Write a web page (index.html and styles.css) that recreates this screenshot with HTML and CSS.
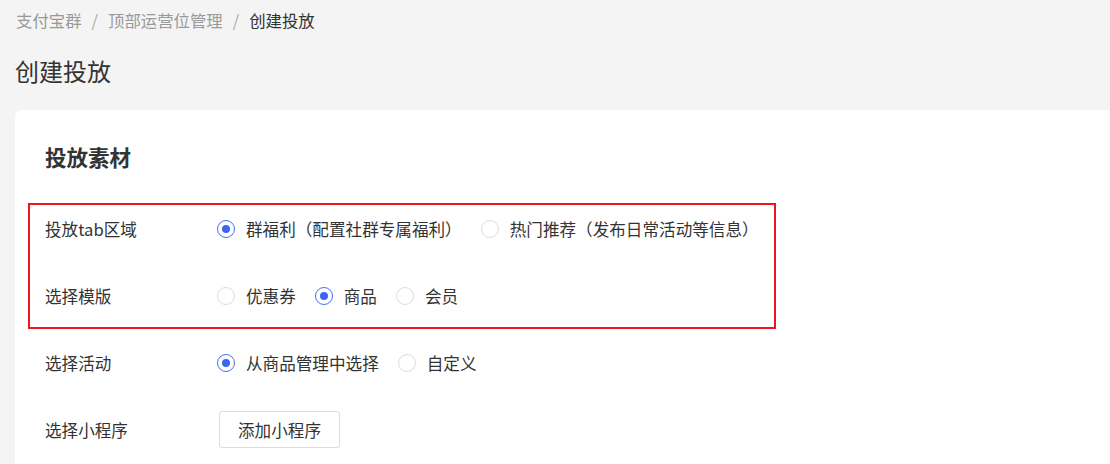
FILE: index.html
```html
<!DOCTYPE html>
<html lang="zh-CN">
<head>
<meta charset="utf-8">
<title>创建投放</title>
<link rel="stylesheet" href="styles.css">
</head>
<body>
<nav class="breadcrumb">
  <span class="crumb">支付宝群</span><span class="sep">/</span><span class="crumb">顶部运营位管理</span><span class="sep">/</span><span class="crumb current">创建投放</span>
</nav>
<h1 class="page-title">创建投放</h1>
<main class="card">
  <h2 class="section-title">投放素材</h2>
  <div class="form">
    <div class="group highlight">
      <div class="row">
        <div class="label">投放tab区域</div>
        <div class="control">
          <label class="radio checked"><span class="dot"></span><span class="text">群福利（配置社群专属福利）</span></label>
          <label class="radio"><span class="dot"></span><span class="text">热门推荐（发布日常活动等信息）</span></label>
        </div>
      </div>
      <div class="row">
        <div class="label">选择模版</div>
        <div class="control">
          <label class="radio"><span class="dot"></span><span class="text">优惠券</span></label>
          <label class="radio checked"><span class="dot"></span><span class="text">商品</span></label>
          <label class="radio"><span class="dot"></span><span class="text">会员</span></label>
        </div>
      </div>
    </div>
    <div class="row">
      <div class="label">选择活动</div>
      <div class="control">
        <label class="radio checked"><span class="dot"></span><span class="text">从商品管理中选择</span></label>
        <label class="radio"><span class="dot"></span><span class="text">自定义</span></label>
      </div>
    </div>
    <div class="row">
      <div class="label">选择小程序</div>
      <div class="control">
        <button class="btn" type="button">添加小程序</button>
      </div>
    </div>
  </div>
</main>
</body>
</html>
```

FILE: styles.css
```css
html, body {
  margin: 0;
  padding: 0;
}
body {
  background: #f4f4f4;
  font-family: "Noto Sans CJK SC", "Noto Sans", sans-serif;
  color: #333;
  font-size: 16.6px;
  text-spacing-trim: space-all;
  overflow: hidden;
}
.breadcrumb {
  padding: 8px 16px 0;
  line-height: 24px;
  font-size: 16.4px;
  color: #999;
  display: flex;
  align-items: center;
}
.breadcrumb .sep {
  margin: 0 10px;
  color: #aaa;
}
.breadcrumb .current {
  color: #333;
}
.page-title {
  margin: 23px 0 0 15px;
  font-size: 24px;
  line-height: 32px;
  font-weight: 400;
  color: #333;
}
.card {
  display: block;
  margin: 23px 0 0 15px;
  background: #fff;
  border-radius: 6px 0 0 0;
  padding: 32px 30px 40px;
  min-height: 400px;
}
.section-title {
  margin: 0;
  font-size: 21.5px;
  line-height: 30px;
  font-weight: 700;
  color: #333;
}
.form {
  margin-top: 23px;
}
.group {
  position: relative;
}
.group.highlight::after {
  content: "";
  position: absolute;
  left: -17px;
  top: 8px;
  width: 748px;
  height: 126px;
  border: 2px solid #f0141e;
  box-sizing: border-box;
  pointer-events: none;
}
.row {
  display: flex;
  align-items: center;
  height: 67px;
}
.label {
  width: 172px;
  flex: none;
  color: #333;
}
.control {
  display: flex;
  align-items: center;
  gap: 19px;
}
.radio {
  display: flex;
  align-items: center;
  color: #333;
}
.radio .dot {
  width: 18px;
  height: 18px;
  box-sizing: border-box;
  border: 1px solid #dcdcdc;
  border-radius: 50%;
  margin-right: 11px;
  display: flex;
  align-items: center;
  justify-content: center;
  background: #fff;
}
.radio.checked .dot {
  border-color: #4a6cf7;
}
.radio.checked .dot::after {
  content: "";
  width: 8px;
  height: 8px;
  border-radius: 50%;
  background: #3d64f6;
}
.btn {
  margin-left: 2px;
  width: 121px;
  height: 37px;
  border: 1px solid #dcdcdc;
  border-radius: 3px;
  background: #fff;
  font-family: inherit;
  font-size: 16.6px;
  color: #333;
  padding: 0;
}
```
